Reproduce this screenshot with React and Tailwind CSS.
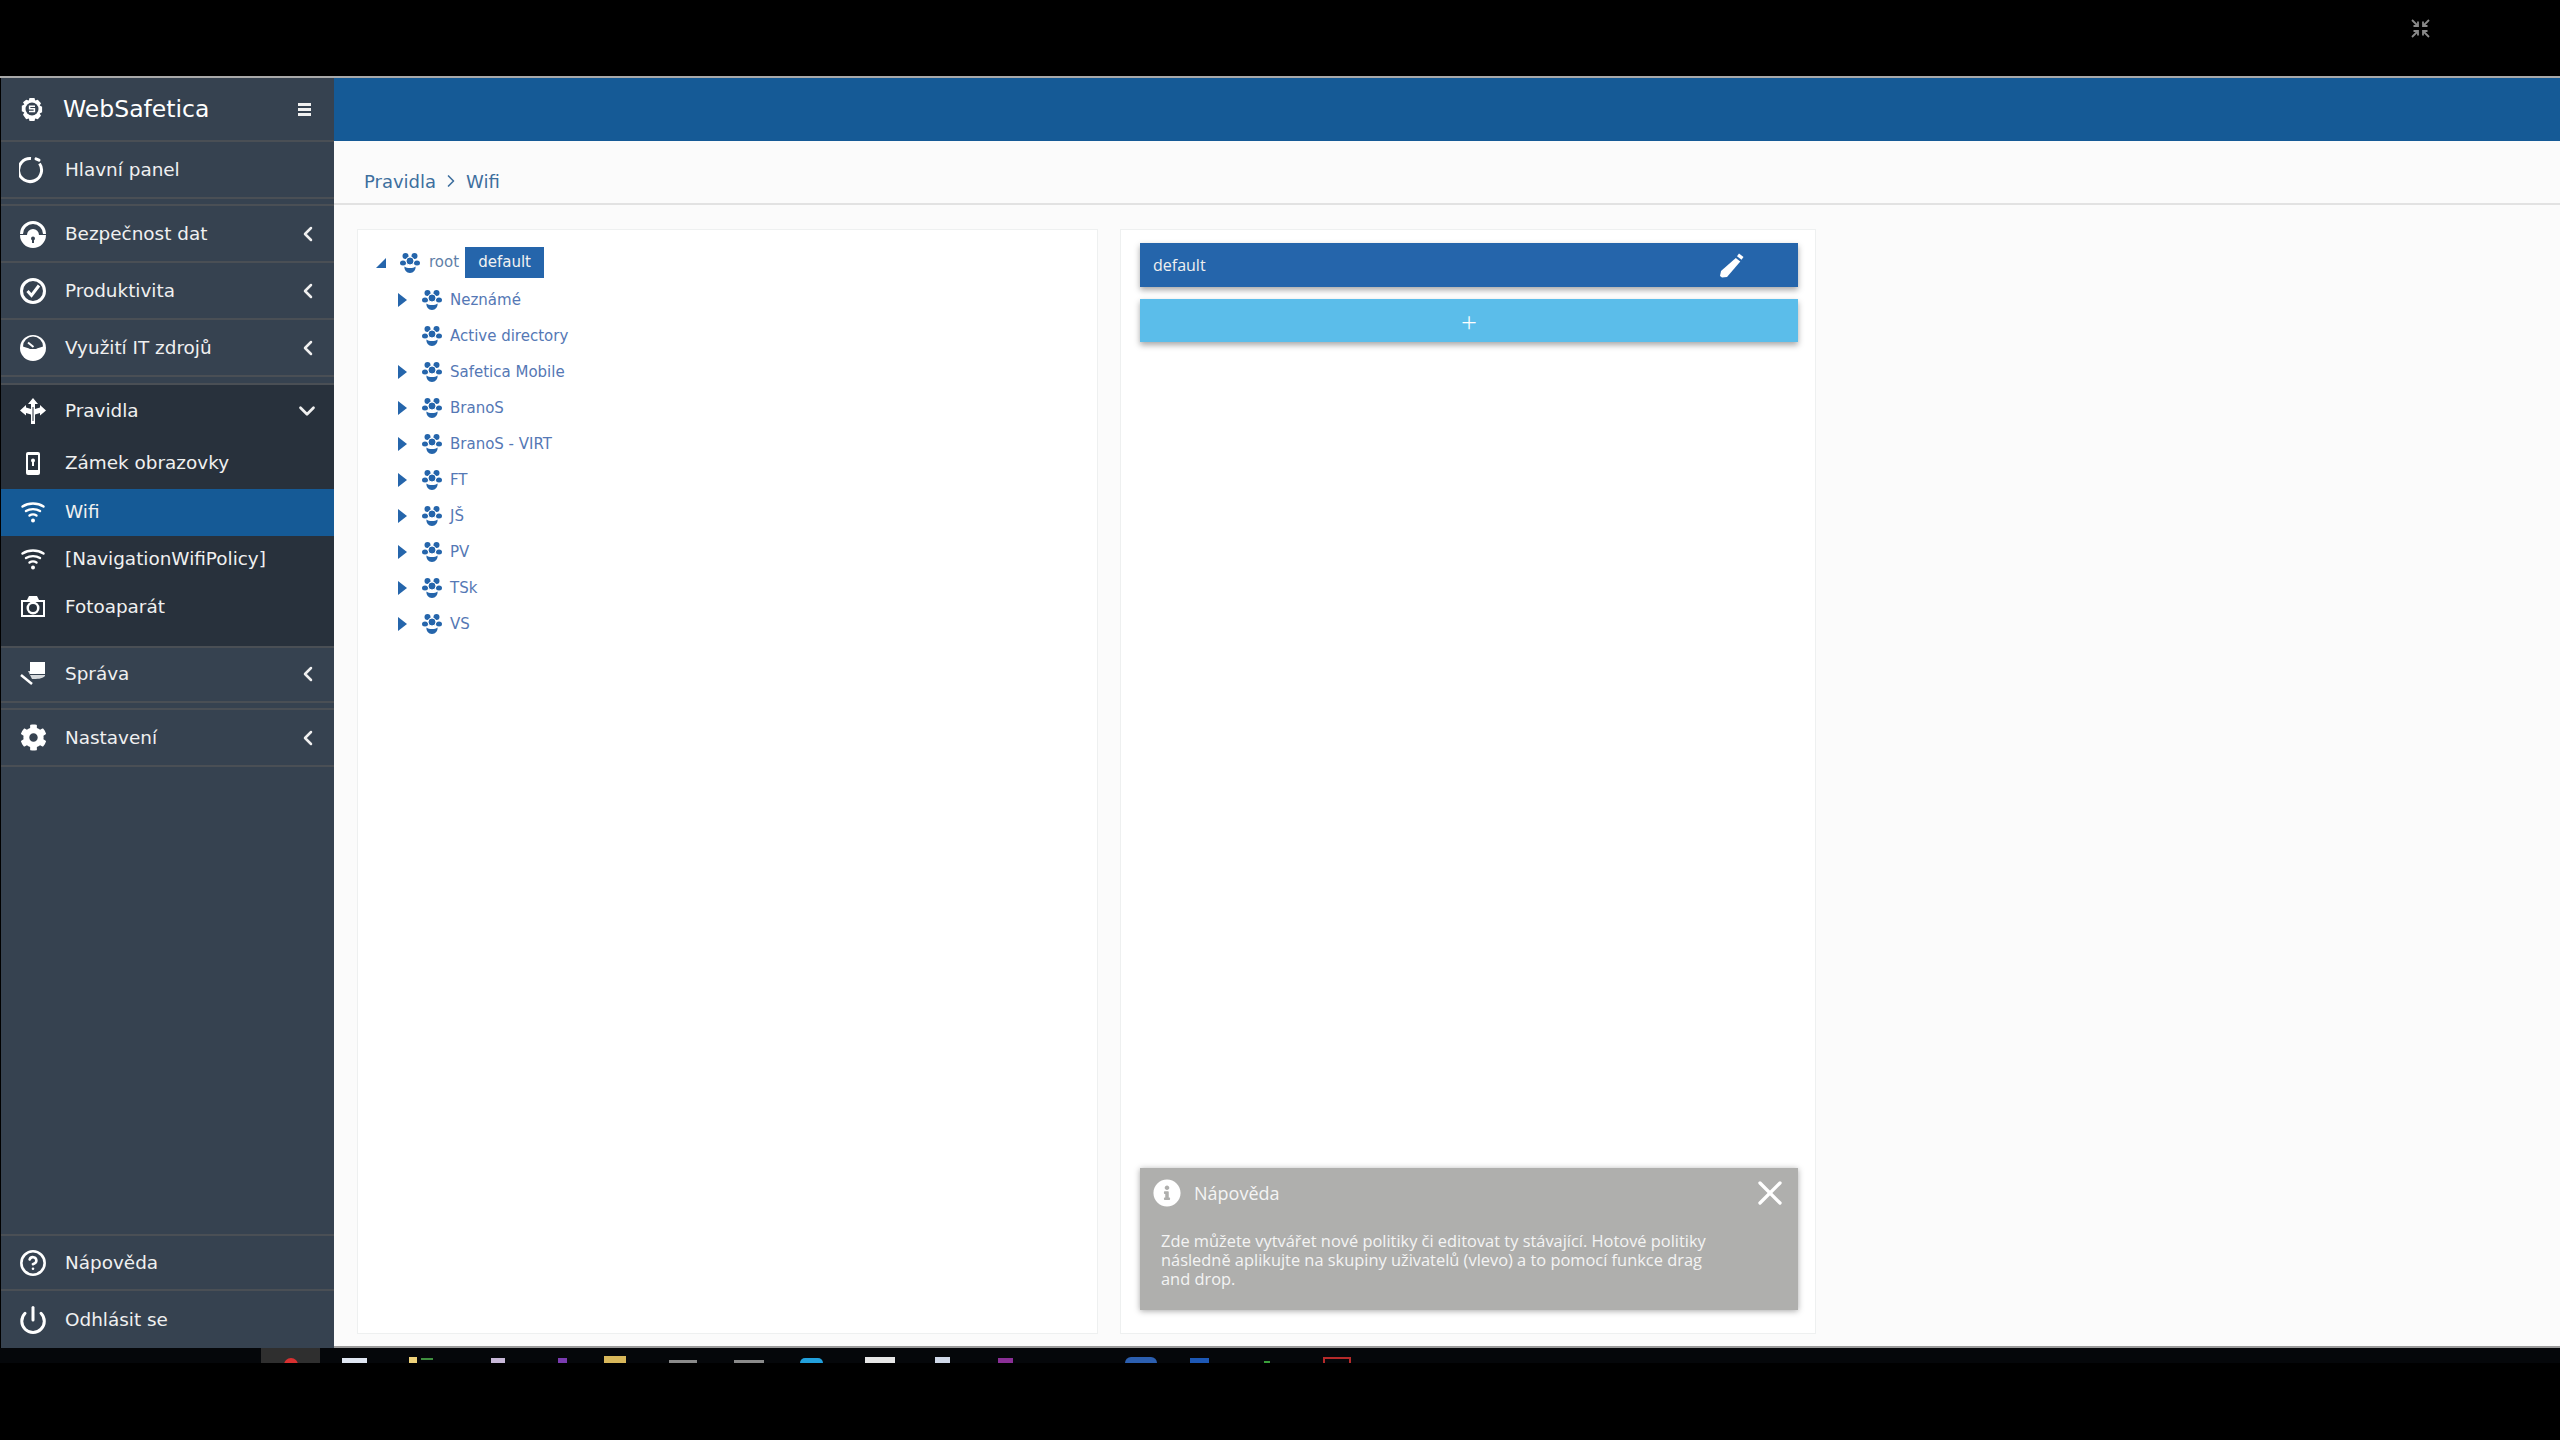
import { ChevronDown, ChevronLeft, CircleHelp, Power, X } from 'lucide-react';
import { FaCog, FaInfoCircle } from 'react-icons/fa';

const dejavu = "font-['DejaVu_Sans',sans-serif]";
const openSans = "font-['Open_Sans',sans-serif]";

function LogoIcon() {
  return (
    <svg width="24" height="24" viewBox="0 0 24 24" className="shrink-0">
      <path fill="#fff" d="M9.5 1h5l.7 2.6 2.6-.9 3.2 3.5-1.3 2.4 2.4 1.2v5.4l-2.4 1.2 1.3 2.4-3.2 3.5-2.6-.9-.7 2.6h-5l-.7-2.6-2.6.9L3 17.8l1.3-2.4L1.8 14.2V8.8l2.5-1.2L3 5.2l3.2-2.5 2.6.9z" />
      <circle cx="12" cy="12" r="6.5" fill="#364250" />
      <path d="M15 9.2H9.6v2.6h4.8v2.8H9" fill="none" stroke="#fff" strokeWidth="1.5" />
    </svg>
  );
}

function PanelIcon() {
  return (
    <svg width="28" height="28" viewBox="0 0 28 28" fill="none" stroke="#fff" strokeWidth="3" className="shrink-0">
      <path d="M20.5 7.5A11.5 11.5 0 1 1 12 2.6" />
      <path d="M17 2.8l3 1.3" strokeLinecap="round" />
    </svg>
  );
}

function LockGaugeIcon() {
  return (
    <svg width="28" height="28" viewBox="0 0 28 28" className="shrink-0">
      <path d="M2.5 14a11.5 11.5 0 0 1 23 0" fill="none" stroke="#fff" strokeWidth="3" />
      <path d="M1 15h7a6 6 0 0 1 12 0h7a13 13 0 0 1-26 0z" fill="#fff" />
      <circle cx="14" cy="18.5" r="2" fill="#364250" />
      <rect x="13" y="19" width="2" height="4" fill="#364250" />
    </svg>
  );
}

function CheckCircleIcon() {
  return (
    <svg width="28" height="28" viewBox="0 0 28 28" fill="none" stroke="#fff" strokeWidth="3" className="shrink-0">
      <circle cx="14" cy="14" r="11.5" />
      <path d="M8.5 14l4 4.5 7.5-10" />
    </svg>
  );
}

function GaugeIcon() {
  return (
    <svg width="28" height="28" viewBox="0 0 28 28" className="shrink-0">
      <circle cx="14" cy="14" r="13" fill="#fff" />
      <path d="M4 12.5a10 10 0 0 1 20 0c-3 1.5-5 1-7 2.5h-6c-2-1.500-4-1-7-2.500z" fill="#364250" />
      <path d="M9 8.500l5.500 4.500" stroke="#fff" strokeWidth="2" />
    </svg>
  );
}

function RulesIcon() {
  return (
    <svg width="26" height="28" viewBox="0 0 26 28" fill="#fff" className="shrink-0">
      <path d="M13 1l5 6h-3v5l5-1.500V8l6 5.500-6 5V16l-5 1.500V27h-4V17.500L6 16v2.500l-6-5L6 8v2.500l5 1.500V7H8z" />
      <path d="M13 10v14" stroke="#28313c" strokeWidth="1" />
    </svg>
  );
}

function PhoneLockIcon() {
  return (
    <svg width="14" height="23" viewBox="0 0 14 23" className="shrink-0">
      <rect x="0" y="0" width="14" height="23" rx="2" fill="#fff" />
      <rect x="2" y="3" width="10" height="15" fill="#28313c" />
      <circle cx="7" cy="8.500" r="2" fill="#fff" />
      <rect x="6" y="9" width="2" height="5" fill="#fff" />
    </svg>
  );
}

function WifiIcon() {
  return (
    <svg width="24" height="24" viewBox="0 0 24 24" fill="none" stroke="#fff" strokeWidth="2.400" strokeLinecap="round" className="shrink-0">
      <path d="M1.500 6.500c6-4 15-4 21 0" />
      <path d="M5 11c4-2.500 10-2.500 14 0" />
      <path d="M8.500 15.500c2-1.300 5-1.300 7 0" />
      <circle cx="12" cy="20.500" r="2" fill="#fff" stroke="none" />
    </svg>
  );
}

function CameraIcon() {
  return (
    <svg width="24" height="21" viewBox="0 0 24 21" className="shrink-0">
      <path d="M0 4h6l2-4h8l2 4h6v17H0z" fill="#fff" />
      <rect x="2" y="6" width="20" height="13" fill="#28313c" />
      <circle cx="12" cy="12" r="6.500" fill="#fff" />
      <circle cx="12" cy="12" r="4" fill="#28313c" />
    </svg>
  );
}

function ManageIcon() {
  return (
    <svg width="26" height="26" viewBox="0 0 26 26" className="shrink-0">
      <rect x="10" y="1" width="15" height="12" fill="#fff" />
      <path d="M8 10h2v4h15v1c-3 3-8 3-13 3z" fill="#fff" fillOpacity=".8" />
      <path d="M1 14l11 9" stroke="#fff" strokeWidth="2.500" />
    </svg>
  );
}

function GroupIcon({ color = '#2565ab' }) {
  return (
    <svg width="20" height="20" viewBox="0 0 20 20" fill={color} className="shrink-0">
      <circle cx="5.500" cy="3" r="3" />
      <circle cx="14.500" cy="3" r="3" />
      <ellipse cx="3" cy="10" rx="3" ry="2.500" />
      <ellipse cx="17" cy="10" rx="3" ry="2.500" />
      <circle cx="10" cy="8" r="4" stroke="#fff" strokeWidth="1" />
      <path d="M4.500 13.500c1.500 1 3 1.500 5.500 1.500s4-.5 5.500-1.500c.5 3.500-2 6.500-5.500 6.500s-6-3-5.500-6.500z" />
    </svg>
  );
}

function PencilIcon() {
  return (
    <svg width="26" height="26" viewBox="0 0 26 26" fill="#fff" className="shrink-0">
      <path d="M20 1.500l4.500 3.500-2 2.700-4.500-3.500z" />
      <path d="M16.800 6l4.500 3.500L8 25l-5 .5L1 24l1-5z" />
    </svg>
  );
}

function CollapseIcon() {
  return (
    <svg width="19" height="19" viewBox="0 0 19 19" fill="none" stroke="#8a8a8a" strokeWidth="1.800" className="shrink-0">
      <path d="M1 1l5 5M7 2.500V7H2.500" />
      <path d="M18 1l-5 5M12 2.500V7h4.500" />
      <path d="M1 18l5-5M7 16.500V12H2.500" />
      <path d="M18 18l-5-5M12 16.500V12h4.500" />
    </svg>
  );
}

function NavRow({ icon, label, chevron, className = 'h-[57px] border-b-2 border-[#4a4f55]' }) {
  return (
    <div className={`flex items-center ${className}`}>
      <div className="flex w-[64px] shrink-0 justify-center">{icon}</div>
      <span className="flex-1 text-[18.400px] text-[#f0f0f0]">{label}</span>
      {chevron === 'left' && <ChevronLeft size={24} strokeWidth={2.500} className="mr-[14px] text-[#f0f0f0]" />}
      {chevron === 'down' && <ChevronDown size={26} strokeWidth={2.500} className="mr-[14px] text-[#f0f0f0]" />}
    </div>
  );
}

function TreeRow({ label, arrow = true }) {
  return (
    <div className="flex h-[36px] items-center">
      <div className="flex w-[24px] shrink-0 justify-start">
        {arrow && <div className="h-0 w-0 border-y-[7px] border-l-[9px] border-y-transparent border-l-[#2565ab]" />}
      </div>
      <GroupIcon />
      <span className="ml-[8px] text-[15px] text-[#5578b5]">{label}</span>
    </div>
  );
}

const groups = ['Neznámé', 'Active directory', 'Safetica Mobile', 'BranoS', 'BranoS - VIRT', 'FT', 'JŠ', 'PV', 'TSk', 'VS'];

export default function App() {
  return (
    <div className={`flex h-[1440px] flex-col overflow-hidden bg-black ${dejavu}`}>
      <div className="flex h-[76px] shrink-0 justify-end pr-[130px] pt-[19px]">
        <CollapseIcon />
      </div>

      <div className="flex h-[1272px] shrink-0 border-t-2 border-[#a9a9a9] pl-[1px]">
        <aside className="flex w-[333px] shrink-0 flex-col bg-[#364250]">
          <div className="flex h-[64px] shrink-0 items-center border-b-2 border-[#4a4f55]">
            <div className="flex w-[62px] shrink-0 justify-center"><LogoIcon /></div>
            <span className="flex-1 pt-[2px] text-[23.500px] text-white">WebSafetica</span>
            <div className="mr-[23px] flex w-[13px] flex-col gap-[2px]">
              <div className="h-[3px] bg-[#f0f0f0]" />
              <div className="h-[3px] bg-[#f0f0f0]" />
              <div className="h-[3px] bg-[#f0f0f0]" />
            </div>
          </div>
          <NavRow icon={<PanelIcon />} label="Hlavní panel" />
          <div className="h-[7px] shrink-0 border-b-2 border-[#4a4f55]" />
          <NavRow icon={<LockGaugeIcon />} label="Bezpečnost dat" chevron="left" />
          <NavRow icon={<CheckCircleIcon />} label="Produktivita" chevron="left" />
          <NavRow icon={<GaugeIcon />} label="Využití IT zdrojů" chevron="left" />
          <div className="h-[8px] shrink-0 border-b-2 border-[#4a4f55]" />

          <div className="flex h-[261px] shrink-0 flex-col bg-[#28313c] pb-[16px]">
            <NavRow icon={<RulesIcon />} label="Pravidla" chevron="down" className="h-[52px]" />
            <NavRow icon={<PhoneLockIcon />} label="Zámek obrazovky" className="h-[52px]" />
            <NavRow icon={<WifiIcon />} label="Wifi" className="h-[47px] bg-[#155a96] pb-[2px]" />
            <NavRow icon={<WifiIcon />} label="[NavigationWifiPolicy]" className="h-[47px] pb-[2px]" />
            <NavRow icon={<CameraIcon />} label="Fotoaparát" className="h-[47px]" />
          </div>

          <NavRow icon={<ManageIcon />} label="Správa" chevron="left" className="h-[57px] border-y-2 border-[#4a4f55] pb-[2px]" />
          <div className="h-[7px] shrink-0 border-b-2 border-[#4a4f55]" />
          <NavRow icon={<FaCog size={27} color="#fff" />} label="Nastavení" chevron="left" />

          <div className="flex-1" />
          <NavRow icon={<CircleHelp size={28} strokeWidth={2.200} color="#fff" />} label="Nápověda" className="h-[57px] border-y-2 border-[#4a4f55]" />
          <NavRow icon={<Power size={30} strokeWidth={2.400} color="#fff" />} label="Odhlásit se" className="h-[57px]" />
        </aside>

        <main className="flex min-w-0 flex-1 flex-col border-b-2 border-[#9a9a9a] bg-[#fbfbfb]">
          <div className="h-[63px] shrink-0 bg-[#155a96]" />
          <div className="flex h-[64px] shrink-0 items-center gap-[5px] border-b-2 border-[#e2e2e2] pl-[30px] pt-[18px] text-[18px] text-[#3e6f9e]">
            <span>Pravidla</span>
            <ChevronLeft size={20} className="rotate-180" />
            <span>Wifi</span>
          </div>

          <div className="flex min-h-0 flex-1 gap-[22px] pb-[12px] pl-[23px] pt-[24px]">
            <section className="w-[741px] shrink-0 border border-[#eef0f0] bg-white pl-[18px] pt-[17px]">
              <div className="flex h-[31px] items-center">
                <div className="mr-[14px] h-0 w-0 border-b-[10px] border-l-[10px] border-b-[#2565ab] border-l-transparent" />
                <GroupIcon />
                <span className="ml-[9px] text-[15px] text-[#5f7fa8]">root</span>
                <span className="ml-[6px] flex h-[31px] w-[79px] items-center justify-center bg-[#2565ab] text-[15px] text-[#f2f2f2]">default</span>
              </div>
              <div className="mt-[4px] pl-[22px]">
                {groups.map((g) => (
                  <TreeRow key={g} label={g} arrow={g !== 'Active directory'} />
                ))}
              </div>
            </section>

            <section className={`flex w-[696px] shrink-0 flex-col border border-[#eef0f0] bg-white pb-[23px] pl-[19px] pr-[17px] pt-[13px] ${openSans}`}>
              <div className="flex h-[44px] items-center bg-[#2565ab] pl-[13px] pr-[53px] text-[16px] text-[#f0f0f0] shadow-[0_3px_6px_rgba(0,0,0,0.35)]">
                <span className="flex-1">default</span>
                <PencilIcon />
              </div>
              <div className="mt-[12px] flex h-[43px] items-center justify-center bg-[#5bbdea] text-[28px] font-light text-white shadow-[0_3px_6px_rgba(0,0,0,0.35)]">+</div>

              <div className="mt-auto h-[142px] bg-[#afafad] text-[#f4f4f4] shadow-[0_1px_6px_rgba(0,0,0,0.35)]">
                <div className="flex h-[50px] items-center pl-[13px] pr-[8px]">
                  <FaInfoCircle size={28} color="#fff" />
                  <span className="ml-[13px] flex-1 text-[18px]">Nápověda</span>
                  <X size={40} strokeWidth={2} color="#fff" />
                </div>
                <p className="ml-[21px] mt-[13px] w-[555px] text-[16.400px] leading-[19px]">
                  Zde můžete vytvářet nové politiky či editovat ty stávající. Hotové politiky následně aplikujte na skupiny uživatelů (vlevo) a to pomocí funkce drag and drop.
                </p>
              </div>
            </section>
          </div>
        </main>
      </div>

      <div className="flex h-[15px] shrink-0 items-start overflow-hidden bg-[#05070a]">
        <div className="ml-[261px] flex h-full w-[59px] justify-center bg-[#2f2f2f] pt-[10px]">
          <div className="h-[14px] w-[14px] rounded-full bg-[#d83030]" />
        </div>
        <div className="ml-[22px] mt-[10px] h-[5px] w-[25px] bg-[#dfe6f2]" />
        <div className="ml-[42px] mt-[9px] h-[6px] w-[8px] bg-[#eed27a]" />
        <div className="ml-[4px] mt-[10px] h-[2px] w-[12px] bg-[#3f8f3f]" />
        <div className="ml-[58px] mt-[10px] h-[5px] w-[14px] bg-[#c8b8d8]" />
        <div className="ml-[53px] mt-[10px] h-[5px] w-[9px] bg-[#7a3bb0]" />
        <div className="ml-[37px] mt-[8px] h-[7px] w-[22px] bg-[#d8b75a]" />
        <div className="ml-[43px] mt-[12px] h-[3px] w-[28px] bg-[#8a8a8a]" />
        <div className="ml-[37px] mt-[12px] h-[3px] w-[30px] bg-[#8a8a8a]" />
        <div className="ml-[36px] mt-[10px] h-[5px] w-[23px] rounded-t-full bg-[#22a0dc]" />
        <div className="ml-[42px] mt-[9px] h-[6px] w-[30px] bg-[#e6e6e6]" />
        <div className="ml-[40px] mt-[9px] h-[6px] w-[15px] bg-[#cfd8e8]" />
        <div className="ml-[48px] mt-[10px] h-[5px] w-[15px] bg-[#8a2f96]" />
        <div className="ml-[112px] mt-[9px] h-[6px] w-[32px] rounded-t-lg bg-[#2c5fb0]" />
        <div className="ml-[33px] mt-[10px] h-[5px] w-[19px] bg-[#1d58b5]" />
        <div className="ml-[55px] mt-[13px] h-[2px] w-[6px] bg-[#3aa03a]" />
        <div className="ml-[53px] mt-[9px] h-[6px] w-[28px] border-2 border-b-0 border-[#b52a2a]" />
      </div>
    </div>
  );
}
